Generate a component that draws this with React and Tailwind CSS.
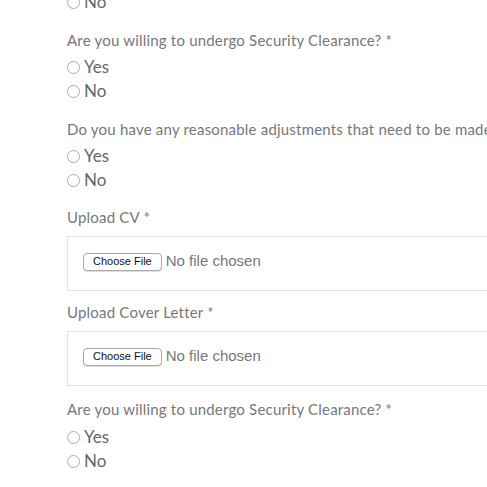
function Radio({ label }) {
  return (
    <label className="flex items-center h-6">
      <span className="w-[13px] h-[13px] rounded-full border border-[#a9a9a9] bg-white mr-[4px] shrink-0" />
      <span className="text-[17px] text-[#666]">{label}</span>
    </label>
  )
}

function Label({ text }) {
  return <p className="text-[15px] text-[#777] h-5 leading-5 whitespace-nowrap tracking-[0.2px]">{text}</p>
}

function Question({ text, gap = 'mt-[5px]' }) {
  return (
    <div className="mt-4">
      <Label text={text} />
      <div className={gap}>
        <Radio label="Yes" />
        <Radio label="No" />
      </div>
    </div>
  )
}

function Upload({ text, first }) {
  return (
    <div className={first ? 'mt-[15px]' : 'mt-[11px]'}>
      <Label text={text} />
      <div className="mt-[9px] border border-[#e3e3e3] w-[440px] h-[55px] flex items-center pl-[15px] pb-[4px]">
        <span className="h-[18px] px-[9px] flex items-center rounded-[4px] border border-[#aaa] bg-white text-[11px] text-[#111] font-['Liberation_Sans',sans-serif] shadow-[0_1px_0_#ddd]">Choose File</span>
        <span className="ml-[4px] text-[15px] text-[#777] font-['Liberation_Sans',sans-serif]">No file chosen</span>
      </div>
    </div>
  )
}

export default function App() {
  return (
    <div className="w-[487px] h-[487px] overflow-hidden bg-white font-['Lato',sans-serif]">
      <div className="pl-[67px] -mt-[10px] flex flex-col">
        <Radio label="No" />
        <Question text="Are you willing to undergo Security Clearance? *" />
        <Question text="Do you have any reasonable adjustments that need to be made to the interview process?" />
        <Upload first text="Upload CV *" />
        <Upload text="Upload Cover Letter *" />
        <div className="-mt-[3px]">
          <Question gap="mt-[6px]" text="Are you willing to undergo Security Clearance? *" />
        </div>
      </div>
    </div>
  )
}
